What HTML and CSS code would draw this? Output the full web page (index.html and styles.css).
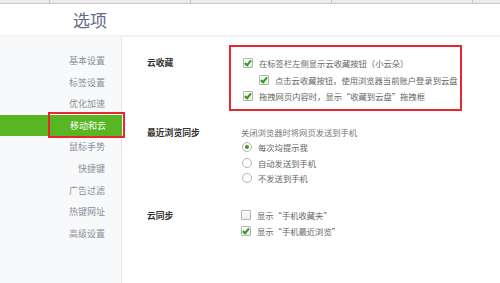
FILE: index.html
```html
<!DOCTYPE html>
<html lang="zh-CN">
<head>
    <meta charset="UTF-8">
    <meta name="viewport" content="width=device-width, initial-scale=1.0">
    <title>选项</title>
    <link rel="stylesheet" href="styles.css">
</head>
<body>
    <div class="tabs">
        <span class="tab tab-first"></span>
        <span class="tab"></span>
        <span class="tab"></span>
        <span class="tab"></span>
        <span class="tab tab-last"></span>
    </div>
    <div class="header">
        <h1>选项</h1>
    </div>
    <div class="main">
        <ul class="sidebar">
            <li>基本设置</li>
            <li>标签设置</li>
            <li>优化加速</li>
            <li class="active">移动和云</li>
            <li>鼠标手势</li>
            <li>快捷键</li>
            <li>广告过滤</li>
            <li>热键网址</li>
            <li>高级设置</li>
        </ul>
        <div class="content">
            <div class="section">
                <div class="label label-box">云收藏</div>
                <div class="options boxed">
                    <div class="row row-tall"><span class="check on"></span>在标签栏左侧显示云收藏按钮（小云朵）</div>
                    <div class="row row-tall sub"><span class="check on"></span>点击云收藏按钮，使用浏览器当前账户登录到云盘</div>
                    <div class="row row-tall"><span class="check on"></span>拖拽网页内容时，显示“收藏到云盘”拖拽框</div>
                </div>
            </div>
            <div class="section sync">
                <div class="label">最近浏览同步</div>
                <div class="options">
                    <div class="row hint">关闭浏览器时将网页发送到手机</div>
                    <div class="row"><span class="radio on"></span>每次均提示我</div>
                    <div class="row"><span class="radio"></span>自动发送到手机</div>
                    <div class="row"><span class="radio"></span>不发送到手机</div>
                </div>
            </div>
            <div class="section cloud">
                <div class="label">云同步</div>
                <div class="options">
                    <div class="row"><span class="check"></span>显示“手机收藏夹”</div>
                    <div class="row"><span class="check on"></span>显示“手机最近浏览”</div>
                </div>
            </div>
        </div>
    </div>
</body>
</html>
```

FILE: styles.css
```css
* {
    box-sizing: border-box;
}

body {
    margin: 0;
    height: 283px;
    overflow: hidden;
    font-family: "Noto Sans CJK SC", "Noto Sans", sans-serif;
    background-color: #fff;
    display: flex;
    flex-direction: column;
}

.tabs {
    display: flex;
    height: 4px;
    background-color: #ececec;
    border-bottom: 1px solid #c9c9c9;
}

.tab {
    width: 141px;
    border-right: 1px solid #c4c4c4;
}

.tab-first {
    width: 50px;
}

.tab-last {
    flex: 1;
    border-right: none;
}

.header {
    height: 33px;
    padding-left: 73px;
    border-bottom: 2px solid #f1f2f3;
    display: flex;
    align-items: center;
}

.header h1 {
    margin: 0;
    font-size: 17px;
    font-weight: normal;
    color: #5f6e84;
}

.main {
    flex: 1;
    display: flex;
}

.sidebar {
    list-style: none;
    margin: 0;
    padding: 13px 0 0;
    width: 122px;
    background-color: #f8f9fb;
    border-right: 1px solid #e4e7ea;
}

.sidebar li {
    height: 21.6px;
    line-height: 21.6px;
    padding-right: 16px;
    text-align: right;
    font-size: 9px;
    color: #8a8f96;
    position: relative;
}

.sidebar li.active {
    background-color: #57b621;
    color: #fff;
    margin-right: -1px;
}

/* red highlight drawn over the active item */
.sidebar li.active::after {
    content: "";
    position: absolute;
    left: 48px;
    right: -3px;
    top: -3px;
    bottom: -2px;
    border: 2px solid #e8262d;
}

.content {
    flex: 1;
    padding: 8px 0 0 25px;
}

.section {
    display: flex;
}

.section.sync {
    margin-top: 14px;
}

.section.cloud {
    margin-top: 22px;
}

.label {
    width: 82px;
    font-size: 8.8px;
    font-weight: bold;
    color: #333;
    line-height: 15.3px;
}

.label-box {
    padding-top: 10px;
    line-height: 16.5px;
}

.options {
    padding-left: 12px;
}

.options.boxed {
    width: 233px;
    border: 2px solid #e8262d;
    padding: 8px 0 4px 12px;
}

.row {
    display: flex;
    align-items: center;
    height: 15.3px;
    font-size: 8.3px;
    color: #666;
    white-space: nowrap;
}

.row-tall {
    height: 16.5px;
}

.row.sub {
    padding-left: 16px;
}

.row.hint {
    color: #777;
}

.check {
    width: 10px;
    height: 10px;
    margin-right: 6px;
    border: 1px solid #b3b3b3;
    border-radius: 1px;
    background: linear-gradient(#fff, #ececec);
    position: relative;
    flex-shrink: 0;
}

.check.on::after {
    content: "";
    position: absolute;
    left: 2px;
    top: 0px;
    width: 2px;
    height: 5px;
    border-right: 2px solid #2e9e12;
    border-bottom: 2px solid #2e9e12;
    transform: rotate(40deg);
    transform-origin: center;
}

.radio {
    width: 10px;
    height: 10px;
    margin-left: 1px;
    margin-right: 6px;
    border: 1px solid #b3b3b3;
    border-radius: 50%;
    background-color: #fff;
    display: flex;
    align-items: center;
    justify-content: center;
    flex-shrink: 0;
}

.radio.on::after {
    content: "";
    width: 4px;
    height: 4px;
    border-radius: 50%;
    background-color: #2ea312;
}
```
